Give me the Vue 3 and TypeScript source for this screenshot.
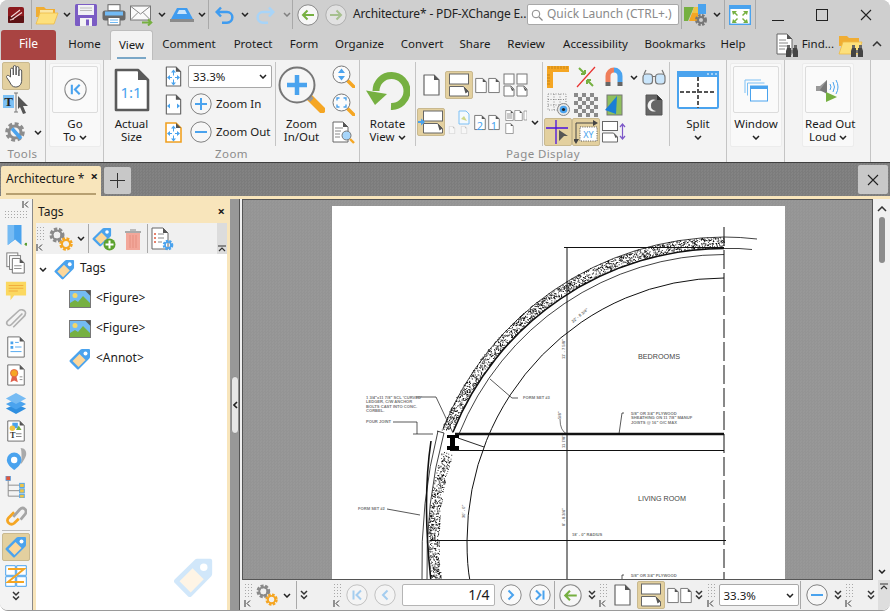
<script setup lang="ts">
import { h } from 'vue'

interface IconLabel {
  x: number
  y: number
  size: number
  text: string
  fill: string
  family: string
  weight?: number
}

const iconLabels: Record<string, IconLabel[]> = {
  tcur: [{ x: 5.5, y: 14, size: 13, text: 'T', fill: '#222', family: 'Liberation Serif', weight: 700 }],
  actual: [{ x: 17, y: 30, size: 15, text: '1:1', fill: '#4aa3ee', family: 'Noto Sans' }],
  n21: [
    { x: 6, y: 18, size: 11, text: '2', fill: '#4aa3ee', family: 'Noto Sans' },
    { x: 20, y: 18, size: 11, text: '1', fill: '#4aa3ee', family: 'Noto Sans' },
  ],
  xy: [{ x: 14.5, y: 18, size: 9, text: 'XY', fill: '#4aa3ee', family: 'Noto Sans' }],
  content: [{ x: 8.5, y: 20, size: 9, text: 'T', fill: '#333', family: 'Liberation Serif', weight: 700 }],
}

const Ico = (p: { n: string; w: number; h?: number; vb?: string }) => {
  const labels = iconLabels[p.n] ?? []
  return h('svg', { width: p.w, height: p.h ?? p.w, viewBox: p.vb }, [
    h('use', { href: '#' + p.n }),
    ...labels.map((l) =>
      h(
        'text',
        {
          x: l.x,
          y: l.y,
          'text-anchor': 'middle',
          'font-size': l.size,
          'font-family': l.family,
          'font-weight': l.weight ?? 400,
          fill: l.fill,
        },
        l.text,
      ),
    ),
  ])
}

const tabs = ['Home', 'View', 'Comment', 'Protect', 'Form', 'Organize', 'Convert', 'Share', 'Review', 'Accessibility', 'Bookmarks', 'Help']
const railTop = ['bookmark', 'pages', 'comment', 'clip', 'form', 'cert', 'layers', 'content', 'pins', 'tree', 'link']
const treeRows = [
  { icon: 'image', text: '<Figure>' },
  { icon: 'image', text: '<Figure>' },
  { icon: 'tag', text: '<Annot>' },
]

function makeStipple(): string {
  let s = 7
  const r = () => (s = (s * 16807) % 2147483647) / 2147483647
  let d = ''
  for (let i = 0; i < 2600; i++) {
    const a = (Math.PI / 180) * (172 + r() * 98)
    let R = 293 + r() * 11
    let y = 540 + R * Math.sin(a)
    if (y > 429 && y < 450) continue
    if (y >= 450) {
      R = 285 + r() * 11
      y = 540 + R * Math.sin(a)
    }
    const x = 724 + R * Math.cos(a)
    if (x > 724) continue
    d += `M${x.toFixed(1)} ${y.toFixed(1)}h.9v.9h-.9z`
  }
  return d
}
const stipple = makeStipple()
const wallNotes = [
  { x: 366, y: 397.5, t: '1 3/4"x11 7/8" SCL \'CURVED\'' },
  { x: 366, y: 402, t: 'LEDGER, C/W ANCHOR' },
  { x: 366, y: 406.5, t: 'BOLTS CAST INTO CONC.' },
  { x: 366, y: 411, t: 'CORBEL.' },
  { x: 366, y: 421.5, t: 'POUR JOINT' },
  { x: 523, y: 397.5, t: 'FORM SET #3' },
  { x: 631, y: 413.5, t: '5/8" OR 3/4" PLYWOOD' },
  { x: 631, y: 418, t: 'SHEATHING ON 11 7/8" MANUF' },
  { x: 631, y: 422.5, t: 'JOISTS @ 16" O/C MAX' },
  { x: 358, y: 508.5, t: 'FORM SET #2' },
  { x: 572, y: 535, t: '18\' - 0" RADIUS' },
  { x: 631, y: 575.5, t: '5/8" OR 3/4" PLYWOOD' },
]
</script>

<template>
  <div class="root">
    <div class="win">
      <!-- title bar -->
      <header class="titlebar">
        <Ico n="logo" :w="16" /><i class="vsep"></i>
        <Ico n="folder" :w="24" :h="20" /><Ico n="chev" :w="8" :h="5" />
        <Ico n="save" :w="22" />
        <Ico n="print" :w="24" :h="22" />
        <Ico n="mail" :w="24" :h="22" /><Ico n="chev" :w="8" :h="5" />
        <Ico n="stamp" :w="24" :h="16" /><Ico n="chev" :w="8" :h="5" /><i class="vsep"></i>
        <Ico n="undo" :w="20" :h="18" /><Ico n="chev" :w="8" :h="5" />
        <Ico n="redo" :w="20" :h="18" /><Ico class="pale" n="chev" :w="8" :h="5" /><i class="vsep"></i>
        <Ico n="cback" :w="22" /><Ico class="pale" n="cfwd" :w="22" />
        <div class="title">Architecture* - PDF-XChange E..</div>
        <div class="quick"><Ico n="search" :w="12" /><span>Quick Launch (CTRL+.)</span></div>
        <i></i><i class="vsep"></i>
        <Ico n="apps" :w="24" /><Ico n="chev" :w="8" :h="5" /><i class="vsep"></i>
        <Ico n="fullscr" :w="22" :h="20" /><i class="vsep"></i>
        <Ico n="wmin" :w="14" /><Ico n="wmax" :w="14" /><Ico n="wclose" :w="14" />
      </header>

      <!-- menu tabs -->
      <nav class="menubar">
        <div class="file">File</div>
        <div v-for="t in tabs" :key="t" class="tab" :class="{ active: t === 'View', home: t === 'Home' }">{{ t }}</div>
        <div class="finder">
          <Ico n="findDoc" :w="22" :h="24" /><span>Find...</span><Ico n="findFolder" :w="25" :h="24" />
        </div>
        <Ico class="collapse" n="chevUp" :w="10" :h="6" />
      </nav>

      <!-- ribbon -->
      <section class="ribbon">
        <div class="group g-tools">
          <div class="body col">
            <div class="btn28 on"><Ico n="hand" :w="20" :h="24" /></div>
            <div class="btn28"><Ico n="tcur" :w="26" :h="24" vb="0 0 26 24" /></div>
            <div class="gear-row"><Ico n="wrench" :w="22" /><Ico n="chev" :w="8" :h="5" /></div>
          </div>
          <div class="label">Tools</div>
        </div>

        <div class="group g-go">
          <div class="body">
            <div class="card">
              <div class="inner"><Ico n="cfirst" :w="23" /></div>
              <div class="txt">Go<br />To <Ico class="inl" n="chev" :w="8" :h="5" /></div>
            </div>
          </div>
        </div>

        <div class="group g-zoom">
          <div class="body row">
            <div class="big w55">
              <div class="bigicon"><Ico n="actual" :w="36" :h="44" vb="0 0 36 44" /></div>
              <div class="txt">Actual<br />Size</div>
            </div>
            <div class="col w28">
              <div class="btn28"><Ico n="pfit" :w="17" :h="21" /></div>
              <div class="btn28"><Ico n="pwidth" :w="17" :h="21" /></div>
              <div class="btn28"><Ico n="pvisible" :w="17" :h="21" /></div>
            </div>
            <div class="col zoomctl">
              <div class="h28"><div class="combo big-combo"><span>33.3%</span><Ico n="chev" :w="8" :h="5" /></div></div>
              <div class="h28 zrow"><Ico n="cplus" :w="22" /><span>Zoom In</span></div>
              <div class="h28 zrow"><Ico n="cminus" :w="22" /><span>Zoom Out</span></div>
            </div>
            <div class="big w51">
              <div class="bigicon"><Ico n="zoomBig" :w="47" /></div>
              <div class="txt">Zoom<br />In/Out</div>
            </div>
            <div class="col w33">
              <div class="btn33"><Ico n="zud" :w="23" /></div>
              <div class="btn33"><Ico n="zfit" :w="23" /></div>
              <div class="btn33"><Ico n="zdoc" :w="23" /></div>
            </div>
          </div>
          <div class="label">Zoom</div>
        </div>

        <div class="group g-page">
          <div class="body row">
            <div class="big w57 sepr">
              <div class="bigicon"><Ico n="rotate" :w="44" :h="40" /></div>
              <div class="txt">Rotate<br />View <Ico class="inl" n="chev" :w="8" :h="5" /></div>
            </div>
            <div class="layouts sepr">
              <div class="btn28"><Ico n="page" :w="17" :h="22" /></div>
              <div class="btn28 on"><Ico n="contin" :w="22" :h="24" /></div>
              <div class="btn28"><Ico n="ptwo" :w="25" :h="21" /></div>
              <div class="btn28"><Ico n="pfour" :w="25" :h="24" /></div>
              <i></i>
              <div class="btn28 on"><Ico n="contarrow" :w="26" :h="24" /></div>
              <div class="btn28"><Ico n="pthumbs" :w="22" :h="24" /></div>
              <div class="btn28"><Ico n="n21" :w="26" :h="21" vb="0 0 26 21" /></div>
              <div class="btn28"><Ico n="multi" :w="24" :h="24" /></div>
              <div class="btn12"><Ico n="chev" :w="8" :h="5" /></div>
            </div>
            <div class="ptools sepr">
              <div class="btn28"><Ico n="ruler" :w="22" /></div>
              <div class="btn28"><Ico n="redline" :w="20" :h="22" /></div>
              <div class="btn28"><Ico n="magnet" :w="18" :h="20" /></div>
              <div class="btn12"><Ico n="chev" :w="8" :h="5" /></div>
              <div class="btn28"><Ico n="glasses" :w="24" :h="16" /></div>
              <div class="btn28"><Ico n="gridEye" :w="23" /></div>
              <div class="btn28"><Ico n="checker" :w="24" /></div>
              <div class="btn28"><Ico n="shape" :w="18" :h="22" /></div>
              <i></i>
              <div class="btn28"><Ico n="moon" :w="18" :h="22" /></div>
              <div class="btn28 on"><Ico n="cross" :w="24" /></div>
              <div class="btn28 on"><Ico n="xy" :w="24" vb="0 0 24 24" /></div>
              <div class="btn28"><Ico n="parrows" :w="24" :h="22" /></div>
            </div>
            <div class="big w57">
              <div class="bigicon"><Ico n="split" :w="42" :h="38" /></div>
              <div class="txt">Split<br /><Ico class="inl" n="chev" :w="8" :h="5" /></div>
            </div>
          </div>
          <div class="label">Page Display</div>
        </div>

        <div class="group g-win">
          <div class="body">
            <div class="card">
              <div class="inner"><Ico n="windows" :w="24" /></div>
              <div class="txt">Window<br /><Ico class="inl" n="chev" :w="8" :h="5" /></div>
            </div>
          </div>
        </div>

        <div class="group g-read">
          <div class="body">
            <div class="card">
              <div class="inner"><Ico n="speaker" :w="24" /></div>
              <div class="txt">Read Out<br />Loud <Ico class="inl" n="chev" :w="8" :h="5" /></div>
            </div>
          </div>
        </div>
      </section>

      <!-- document tab strip -->
      <div class="tabstrip">
        <div class="doctab">
          <span>Architecture *</span>
          <b class="tabx">×</b>
        </div>
        <div class="tabbtn"><Ico n="plus" :w="15" /></div>
        <div class="tabbtn closeall"><Ico n="wclose" :w="14" /></div>
      </div>

      <!-- main area -->
      <main class="main">
        <aside class="rail">
          <Ico class="railk" n="ksm" :w="7" />
          <div class="dots raildots"></div>
          <div v-for="r in railTop" :key="r" class="railitem">
            <Ico :n="r" :w="22" vb="0 0 24 24" />
          </div>
          <i class="hsep"></i>
          <div class="railbtn"><Ico n="tag" :w="22" /></div>
          <div class="railitem"><Ico n="zorder" :w="22" /></div>
          <Ico class="raildbl" n="dbl" :w="8" :h="10" />
        </aside>

        <section class="panel">
          <div class="panelhead"><span>Tags</span><b>×</b></div>
          <div class="paneltools">
            <div class="grip"><div class="dots griptall"></div><Ico n="ksm" :w="7" /></div>
            <Ico n="gears" :w="24" />
            <Ico n="chev" :w="8" :h="5" />
            <i class="vsep"></i>
            <Ico n="tagadd" :w="24" />
            <Ico n="trash" :w="18" :h="22" />
            <i class="vsep"></i>
            <Ico n="tagcog" :w="24" />
            <i></i>
            <div class="panelend"><Ico n="chevUpLine" :w="8" :h="7" /></div>
          </div>
          <div class="tree">
            <div class="treehead">
              <Ico n="chev" :w="8" :h="5" />
              <Ico n="tag" :w="21" />
              <span>Tags</span>
            </div>
            <div v-for="(t, i) in treeRows" :key="i" class="treerow">
              <Ico :n="t.icon" :w="22" :h="t.icon === 'tag' ? 22 : 18" />
              <span>{{ t.text }}</span>
            </div>
            <Ico class="watermark" n="tag" :w="41" />
          </div>
        </section>

        <div class="splitter"><div class="pill"><Ico n="chevLeft" :w="5" :h="8" /></div></div>

        <div class="docwrap">
          <div class="docrow">
            <div class="canvas">
              <div class="pdfpage">
                <svg class="drawing" viewBox="332 205 453 375" width="453" height="375">
                  <g fill="none" stroke="#111">
                    <path d="M724 226V580" stroke-dasharray="19 4" stroke-width="1" />
                    <path d="M567 246V580" />
                    <path d="M564 246.5H724" />
                    <path d="M455 433H724" stroke-width="2.4" />
                    <path d="M450 449.5H724" />
                    <path d="M430 539.5H726" />
                    <path d="M724 277A257 263 0 0 0 467 540Q467 565 470 580" stroke-width="1" />
                    <path d="M724 253.500A286.500 286.500 0 0 0 459 433" stroke-width=".8" />
                    <path d="M724 247.500A292.500 292.500 0 0 0 453 431" stroke-width="1.600" />
                    <path d="M724 236A304 304 0 0 0 443 428" stroke-width=".8" />
                    <path d="M724 236Q740 236 757 238M724 247.500Q740 247 752 248.500" stroke-width=".8" />
                    <path d="M438 430Q420 500 422 580" stroke-width=".8" />
                    <path d="M444 432Q425 500 427 580" stroke-width=".8" />
                    <path d="M437 430L444 432" stroke-width=".8" />
                    <path d="M431 440Q422 500 431 580" stroke-width="1.600" />
                    <path d="M416 396H436L453 432" stroke-width=".7" />
                    <path d="M393 421H417V433M413 433H433" stroke-width=".7" />
                    <path d="M518 397H512L490 378" stroke-width=".7" />
                    <path d="M624 412H622L619 433" stroke-width=".7" />
                    <path d="M387 508L420 514" stroke-width=".7" />
                    <path d="M458 437L484 446" stroke-width=".9" />
                    <path d="M560 418Q560 430 567 433" stroke-width=".6" />
                    <path d="M624 574H622V580" stroke-width=".7" />
                  </g>
                  <path :d="stipple" fill="#111" />
                  <path d="M447 434h12v3h-4v8h4v4h-12v-4h3v-8h-3z" fill="#000" />
                  <g fill="#777" class="tiny">
                    <text v-for="n in wallNotes" :key="n.y + n.t" :x="n.x" :y="n.y">{{ n.t }}</text>
                    <text transform="translate(565 358) rotate(-90)">11' - 7 5/8"</text>
                    <text transform="translate(561 418) rotate(-90)">5/8"</text>
                    <text transform="translate(565 447) rotate(-90)">11 7/8"</text>
                    <text transform="translate(565 525) rotate(-90)">8' - 8 3/4"</text>
                    <text transform="translate(465 517) rotate(-90)">30' - 0"</text>
                    <text transform="translate(573 322) rotate(-40)">22' - 8 3/4"</text>
                  </g>
                  <g fill="#444" class="room">
                    <text x="638" y="358">BEDROOMS</text>
                    <text x="638" y="500">LIVING ROOM</text>
                  </g>
                </svg>
              </div>
            </div>
            <div class="vscroll">
              <Ico n="chevUp" :w="10" :h="6" />
              <div class="thumb"></div>
              <Ico class="vdown" n="chev" :w="8" :h="5" />
            </div>
          </div>
          <footer class="status">
            <div class="grip"><div class="dots gripshort"></div><Ico n="ksm" :w="7" /></div>
            <Ico n="gears" :w="22" />
            <Ico n="chev" :w="8" :h="5" />
            <i class="vsep"></i>
            <Ico n="dbl" :w="8" :h="10" />
            <i></i>
            <div class="grip"><div class="dots gripshort"></div><Ico n="ksm" :w="7" /></div>
            <Ico class="pale" n="cfirst" :w="22" />
            <Ico class="pale" n="cprev" :w="22" />
            <div class="pagebox">1/4</div>
            <Ico n="cnext" :w="22" />
            <Ico n="clast" :w="22" />
            <i class="vsep"></i>
            <Ico n="cback" :w="23" />
            <Ico n="dbl" :w="8" :h="10" />
            <div class="grip"><div class="dots gripshort"></div><Ico n="ksm" :w="7" /></div>
            <Ico n="page" :w="17" :h="22" />
            <div class="btn28 on"><Ico n="contin" :w="22" :h="24" /></div>
            <Ico n="ptwo" :w="25" :h="21" />
            <Ico n="dbl" :w="8" :h="10" />
            <div class="grip"><div class="dots gripshort"></div><Ico n="ksm" :w="7" /></div>
            <div class="combo small-combo"><span>33.3%</span><Ico n="chev" :w="8" :h="5" /></div>
            <i class="vsep"></i>
            <Ico n="cminus" :w="22" />
            <Ico n="dbl" :w="8" :h="10" />
            <div class="grip"><div class="dots gripshort"></div><Ico n="ksm" :w="7" /></div>
            <i></i>
            <Ico n="dbl" :w="8" :h="10" />
            <div class="statend"><Ico n="chevUpLine" :w="8" :h="7" /></div>
          </footer>
        </div>
      </main>
    </div>

    <!-- icon definitions -->
    <svg class="defs" width="0" height="0">
      <symbol id="chev" viewBox="0 0 8 5"><path d="M1 1l3 3 3-3" fill="none" stroke="#222" stroke-width="1.5" /></symbol>
      <symbol id="chevUp" viewBox="0 0 10 6"><path d="M1 5l4-4 4 4" fill="none" stroke="#333" stroke-width="1.5" /></symbol>
      <symbol id="chevUpLine" viewBox="0 0 8 7"><path d="M0 1h8M1 6l3-3 3 3" fill="none" stroke="#333" stroke-width="1.2" /></symbol>
      <symbol id="chevLeft" viewBox="0 0 5 8"><path d="M4 1L1 4l3 3" fill="none" stroke="#222" stroke-width="1.6" /></symbol>
      <symbol id="dbl" viewBox="0 0 8 10"><path d="M1 1l3 3 3-3M1 5.500l3 3 3-3" fill="none" stroke="#333" stroke-width="1.5" /></symbol>
      <symbol id="ksm" viewBox="0 0 7 7"><path d="M1 0v7M6 .5L3 3.500l3 3" fill="none" stroke="#333" stroke-width="1" /></symbol>
      <symbol id="plus" viewBox="0 0 15 15"><path d="M7.500 0v15M0 7.500h15" stroke="#333" /></symbol>
      <symbol id="wmin" viewBox="0 0 14 14"><path d="M1 12.500h12" stroke="#222" /></symbol>
      <symbol id="wmax" viewBox="0 0 14 14"><rect x="1.500" y="1.500" width="11" height="11" fill="none" stroke="#222" /></symbol>
      <symbol id="wclose" viewBox="0 0 14 14"><path d="M2 2l10 10M12 2L2 12" stroke="#222" stroke-width="1.100" /></symbol>
      <symbol id="search" viewBox="0 0 12 12"><circle cx="5" cy="5" r="3.800" fill="none" stroke="#888" /><path d="M8 8l3.500 3.500" stroke="#888" stroke-width="1.200" /></symbol>

      <symbol id="logo" viewBox="0 0 16 16"><rect width="16" height="16" rx="2" fill="#8c1a1e" /><rect y="9" width="16" height="7" rx="1" fill="#5e1214" /><path d="M3 10l9-7M4 12.500l10-7M2 13l4-1" stroke="#f1d5d5" stroke-width="1.200" fill="none" /></symbol>
      <symbol id="folder" viewBox="0 0 24 20"><path d="M1 2h8l2 2h9v8H1z" fill="#f0ad33" /><path d="M5 5h13v6H5z" fill="#fbe6a4" /><path d="M1 19L5 8h18l-4 11z" fill="#fde07c" stroke="#edbb46" stroke-width=".8" /></symbol>
      <symbol id="save" viewBox="0 0 22 22"><rect width="22" height="22" rx="1.500" fill="#7b5cc4" /><rect x="3" y="1" width="16" height="10" fill="#f1f1f5" /><path d="M5 4h12M5 6.500h12" stroke="#bbb" /><rect x="5" y="14" width="12" height="8" fill="#f3f3f3" /><rect x="11" y="15.500" width="3" height="6" fill="#7b5cc4" /></symbol>
      <symbol id="print" viewBox="0 0 24 22"><rect x="6" y=".7" width="12" height="6" fill="#fff" stroke="#666" /><rect x="0.500" y="6.500" width="23" height="10" rx="2.500" fill="#6a6a6a" /><rect x="3" y="7.500" width="18" height="4" fill="#71baf5" /><rect x="6" y="13.500" width="12" height="7.500" fill="#fff" stroke="#666" /><path d="M8 16h8M8 18.500h8" stroke="#71baf5" /></symbol>
      <symbol id="mail" viewBox="0 0 24 22"><rect x=".5" y="2" width="20" height="14" fill="#fafafa" stroke="#777" /><path d="M1 2.500L10.500 10 20 2.500M1 15.500l7-7M20 15.500l-7-7" fill="none" stroke="#888" /><path d="M12 18.500h9M18 15.500l3.300 3-3.300 3" fill="none" stroke="#76b041" stroke-width="2" /></symbol>
      <symbol id="stamp" viewBox="0 0 24 16"><path d="M7 1h10l6 11H1z" fill="#3f9cf0" /><path d="M9 3h6l2 4H7z" fill="#c7e4fd" /><rect y="12" width="24" height="3" fill="#8b8b8b" /></symbol>
      <symbol id="undo" viewBox="0 0 20 18"><path d="M6 1.500L1.700 6 6 10.500M2 6h10a5 5 0 010 10.700H7" fill="none" stroke="#3f9cf0" stroke-width="2.500" /></symbol>
      <symbol id="redo" viewBox="0 0 20 18"><path d="M14 1.500L18.300 6 14 10.500M18 6H8a5 5 0 000 10.700h5" fill="none" stroke="#a8d4f8" stroke-width="2.500" /></symbol>

      <symbol id="cback" viewBox="0 0 22 22"><circle cx="11" cy="11" r="10.200" fill="#f7f7f7" stroke="#8a8a8a" /><path d="M17 11H6M10.500 6.500L6 11l4.500 4.500" fill="none" stroke="#76b041" stroke-width="2" /></symbol>
      <symbol id="cfwd" viewBox="0 0 22 22"><circle cx="11" cy="11" r="10.200" fill="#f7f7f7" stroke="#8a8a8a" /><path d="M5 11h11M11.500 6.500L16 11l-4.500 4.500" fill="none" stroke="#76b041" stroke-width="2" /></symbol>
      <symbol id="cfirst" viewBox="0 0 22 22"><circle cx="11" cy="11" r="10.200" fill="#fafafa" stroke="#8a8a8a" /><path d="M7.500 6.500v9M15 6.500L10.500 11l4.500 4.500" fill="none" stroke="#4aa3ee" stroke-width="2" /></symbol>
      <symbol id="clast" viewBox="0 0 22 22"><circle cx="11" cy="11" r="10.200" fill="#fafafa" stroke="#8a8a8a" /><path d="M14.500 6.500v9M7 6.500l4.500 4.500L7 15.500" fill="none" stroke="#4aa3ee" stroke-width="2" /></symbol>
      <symbol id="cprev" viewBox="0 0 22 22"><circle cx="11" cy="11" r="10.200" fill="#fafafa" stroke="#8a8a8a" /><path d="M13.500 6.500L9 11l4.500 4.500" fill="none" stroke="#4aa3ee" stroke-width="2" /></symbol>
      <symbol id="cnext" viewBox="0 0 22 22"><circle cx="11" cy="11" r="10.200" fill="#fafafa" stroke="#8a8a8a" /><path d="M8.500 6.500L13 11l-4.500 4.500" fill="none" stroke="#4aa3ee" stroke-width="2" /></symbol>
      <symbol id="cplus" viewBox="0 0 22 22"><circle cx="11" cy="11" r="10.200" fill="#f7f7f7" stroke="#808080" /><path d="M11 5v12M5 11h12" stroke="#4aa3ee" stroke-width="2" /></symbol>
      <symbol id="cminus" viewBox="0 0 22 22"><circle cx="11" cy="11" r="10.200" fill="#f7f7f7" stroke="#808080" /><path d="M5 11h12" stroke="#4aa3ee" stroke-width="2" /></symbol>

      <symbol id="apps" viewBox="0 0 24 24"><path d="M0 4h10L4 18H0z" fill="#76b041" /><path d="M10 4h4v6h-6z" fill="#f0c445" /><path d="M14 1h8v10h-8z" fill="#4aa3ee" /><path d="M8 10h6v8H5z" fill="#f5a623" /><circle cx="17" cy="17" r="4.500" fill="none" stroke="#777" stroke-width="3" stroke-dasharray="2.300 1.300" /><circle cx="17" cy="17" r="3" fill="none" stroke="#777" stroke-width="2" /></symbol>
      <symbol id="fullscr" viewBox="0 0 22 20"><rect x=".7" y=".7" width="20.600" height="18.600" fill="#fff" stroke="#4aa3ee" stroke-width="1.400" /><rect width="22" height="4" fill="#4aa3ee" /><path d="M3 6h5L6.500 7.500 9 10l-1 1-2.500-2.500L4 10zM19 6h-5l1.500 1.500L13 10l1 1 2.500-2.500L18 10zM3 18h5l-1.500-1.500L9 14l-1-1-2.500 2.500L4 14zM19 18h-5l1.500-1.500L13 14l1-1 2.500 2.500L18 14z" fill="#76b041" /></symbol>
      <symbol id="binoc" viewBox="0 0 12 12"><path d="M1 3h4v9H0V6zM7 3h4l1 3v6H7z" fill="#444" /><rect x="1" y="0" width="3" height="3" fill="#666" /><rect x="8" y="0" width="3" height="3" fill="#666" /><rect x="5" y="5" width="2" height="3" fill="#777" /></symbol>
      <symbol id="findDoc" viewBox="0 0 22 24"><path d="M1 1h10l5 5v15H1z" fill="#fff" stroke="#666" /><path d="M11 1l5 5h-5z" fill="#555" /><path d="M3 7h7M3 10h9M3 13h9M3 16h6" stroke="#888" /><use href="#binoc" x="10" y="12" width="12" height="12" /></symbol>
      <symbol id="findFolder" viewBox="0 0 25 24"><path d="M1 3h8l2 2h10v8H1z" fill="#f0ad33" /><path d="M1 21L5 9h19l-4 12z" fill="#fde07c" stroke="#edbb46" stroke-width=".8" /><use href="#binoc" x="13" y="12" width="12" height="12" /></symbol>

      <symbol id="hand" viewBox="0 0 20 24"><path d="M4.500 13V5.500a1.400 1.400 0 012.800 0V11 3a1.400 1.400 0 012.800 0v8V4a1.400 1.400 0 012.800 0v8V7a1.400 1.400 0 012.800 0v9c0 4.500-2.500 7-6 7s-4.500-2-6-5l-3-4.500c-1-1.500 1-3 2.500-1.500z" fill="#fff" stroke="#555" /></symbol>
      <symbol id="tcur" viewBox="0 0 26 24"><rect y="3" width="11" height="13" fill="#7cc0f5" /><path d="M11 1h4M13 1v19M11 20h4" stroke="#777" fill="none" /><path d="M15 4l10 10h-5l3 7-3 1-3-7-2 2z" fill="#555" /></symbol>
      <symbol id="wrench" viewBox="0 0 22 22"><circle cx="10" cy="11" r="7.500" fill="none" stroke="#8d8d8d" stroke-width="4.500" stroke-dasharray="3.500 2.300" /><circle cx="10" cy="11" r="6" fill="none" stroke="#8d8d8d" stroke-width="3" /><path d="M7 7.500l9 10" stroke="#4aa3ee" stroke-width="3.500" /></symbol>

      <symbol id="page" viewBox="0 0 17 22"><path d="M1 1h10l5 5v15H1z" fill="#fff" stroke="#666" stroke-width="1.200" stroke-linejoin="round" /><path d="M11 1l5 5h-5z" fill="#555" /></symbol>
      <symbol id="actual" viewBox="0 0 36 44"><path d="M2 2h22l10 10v30H2z" fill="#fff" stroke="#5a5a5a" stroke-width="2.600" stroke-linejoin="round" /><path d="M24 2l10 10H24z" fill="#5a5a5a" /></symbol>
      <symbol id="arr4" viewBox="0 0 17 21"><path d="M8.500 3.500l2.500 3h-5zM8.500 19.500l2.500-3h-5zM2 11.500l3-2.500v5zM15 11.500L12 9v5z" fill="#4aa3ee" /><path d="M8.500 6v3.500M8.500 13.500V17M5 11.500h2M10 11.500h2" stroke="#4aa3ee" /></symbol>
      <symbol id="pfit" viewBox="0 0 17 21"><use href="#page" width="17" height="21" /><use href="#arr4" width="17" height="21" /></symbol>
      <symbol id="pwidth" viewBox="0 0 17 21"><use href="#page" width="17" height="21" /><path d="M2 12l3-2.500v5zM15 12l-3-2.500v5z" fill="#4aa3ee" /></symbol>
      <symbol id="pvisible" viewBox="0 0 17 21"><path d="M1 1h10l5 5v14H1z" fill="#fff" stroke="#f0a020" stroke-width="1.600" /><path d="M11 1l5 5h-5z" fill="#555" /><use href="#arr4" width="17" height="21" /></symbol>
      <symbol id="zoomBig" viewBox="0 0 47 47"><path d="M30 30l14 14" stroke="#f5a623" stroke-width="7" stroke-linecap="round" /><path d="M30 30l4 4" stroke="#999" stroke-width="5" /><circle cx="19" cy="19" r="17.500" fill="#f6f6f6" stroke="#777" stroke-width="2" /><path d="M19 9v20M9 19h20" stroke="#4aa3ee" stroke-width="4.500" /></symbol>
      <symbol id="lens" viewBox="0 0 23 23"><path d="M15 15l7 7" stroke="#f5a623" stroke-width="3.500" stroke-linecap="round" /><circle cx="9.500" cy="9.500" r="8.500" fill="#fbfbfb" stroke="#777" /></symbol>
      <symbol id="zud" viewBox="0 0 23 23"><use href="#lens" width="23" height="23" /><path d="M9.500 3.500l3.500 4.500H6zM9.500 15.500L13 11H6z" fill="#4aa3ee" /></symbol>
      <symbol id="zfit" viewBox="0 0 23 23"><use href="#lens" width="23" height="23" /><path d="M5 7.500V5h2.500M11.500 5H14v2.500M5 11.500V14h2.500M14 11.500V14h-2.500" fill="none" stroke="#4aa3ee" stroke-width="1.400" /></symbol>
      <symbol id="zdoc" viewBox="0 0 23 23"><path d="M1 1h10l5 5v15H1z" fill="#fff" stroke="#666" /><path d="M11 1l5 5h-5z" fill="#555" /><path d="M3 7h8M3 10h6M3 13h5M3 16h5" stroke="#888" /><path d="M18 18l4 4" stroke="#f5a623" stroke-width="2.400" /><circle cx="14.500" cy="14.500" r="4.500" fill="#a6d5fa" stroke="#777" /></symbol>
      <symbol id="rotate" viewBox="0 0 44 40"><path d="M25 36.500A15.500 15.500 0 1 0 10 21" fill="none" stroke="#76b041" stroke-width="7" /><path d="M0 20.500L21 24 9 35z" fill="#76b041" /></symbol>

      <symbol id="contin" viewBox="0 0 22 24"><rect x="1.500" y="1" width="19" height="10" fill="#fff" stroke="#666" /><path d="M1.500 13.500h14l5 5V23h-19z" fill="#fff" stroke="#666" /><path d="M15.500 13.500l5 5-3 2z" fill="#555" /></symbol>
      <symbol id="contarrow" viewBox="0 0 26 24"><use href="#contin" x="4" width="22" height="24" /><path d="M0 12h4" stroke="#4aa3ee" stroke-width="2" /><path d="M3 8.500l4 3.500-4 3.500z" fill="#4aa3ee" /></symbol>
      <symbol id="ptwo" viewBox="0 0 25 21"><use href="#page" y="1" width="12" height="19" /><use href="#page" x="13" y="1" width="12" height="19" /></symbol>
      <symbol id="pfour" viewBox="0 0 25 24"><rect x="1" y="1" width="10" height="10" fill="#fff" stroke="#777" /><rect x="14" y="1" width="10" height="10" fill="#fff" stroke="#777" /><path d="M1 13h7l3 3v7H1z" fill="#fff" stroke="#777" /><path d="M14 13h7l3 3v7H14z" fill="#fff" stroke="#777" /><path d="M7 13l4 4-2 1zM20 13l4 4-2 1z" fill="#555" /></symbol>
      <symbol id="pthumbs" viewBox="0 0 22 24"><g opacity=".35"><use href="#page" y="16" width="8" height="8" /><use href="#page" x="12" y="16" width="8" height="8" /></g><path d="M11 1h7l3 3v10H11z" fill="#f4fafe" stroke="#7cc0f5" /><path d="M13 9l3-3 3 5z" fill="#cfd88a" /></symbol>
      <symbol id="n21" viewBox="0 0 26 21"><use href="#page" width="12" height="21" /><use href="#page" x="14" width="12" height="21" /></symbol>
      <symbol id="multi" viewBox="0 0 24 24"><use href="#page" x="2" y="0" width="9" height="11" /><use href="#page" x="11" y="0" width="9" height="11" /><path d="M21 1h3v9h-3z" fill="#fff" stroke="#888" stroke-width=".7" /><use href="#page" x="2" y="13" width="9" height="11" /><path d="M4 4h5M4 6h5M4 8h5" stroke="#666" stroke-width=".7" /></symbol>

      <symbol id="ruler" viewBox="0 0 22 22"><path d="M0 0h22v6H6v16H0z" fill="#f5a623" /><path d="M2 0v3M5 0v3M8 0v3M11 0v3M14 0v3M17 0v3M20 0v3M0 9h3M0 12h3M0 15h3M0 18h3" stroke="#b97a10" stroke-width=".7" /></symbol>
      <symbol id="redline" viewBox="0 0 20 22"><path d="M1 21L19 1" stroke="#e8312f" stroke-width="1.200" /><path d="M3 2l6 6M9 8V4M9 8H5M17 20l-6-6M11 14v4M11 14h4" fill="none" stroke="#76b041" stroke-width="2" /></symbol>
      <symbol id="magnet" viewBox="0 0 18 20"><path d="M3 15V9a6 6 0 016-6" fill="none" stroke="#ef7d5a" stroke-width="5" /><path d="M15 15V9a6 6 0 00-6-6" fill="none" stroke="#4aa3ee" stroke-width="5" /><path d="M.5 15h5v4h-5zM12.500 15h5v4h-5z" fill="#666" /></symbol>
      <symbol id="glasses" viewBox="0 0 24 16"><rect x="1" y="5" width="9.500" height="10" rx="3" fill="#c9e5fb" stroke="#777" stroke-width="1.200" /><rect x="13.500" y="5" width="9.500" height="10" rx="3" fill="#c9e5fb" stroke="#777" stroke-width="1.200" /><path d="M10.500 7.500h3M2 5l2-4M22 5l-2-4" fill="none" stroke="#777" stroke-width="1.200" /></symbol>
      <symbol id="gridEye" viewBox="0 0 23 23"><path d="M1 1h18v16H1zM7 1v16M13 1v16M1 6.500h18M1 12h18" fill="none" stroke="#888" stroke-dasharray="1 1.500" /><circle cx="16.500" cy="16.500" r="6" fill="#e8e8e8" stroke="#888" /><circle cx="16.500" cy="16.500" r="3.800" fill="#4aa3ee" /><circle cx="16.500" cy="16.500" r="1.600" fill="#222" /></symbol>
      <pattern id="chk" width="8" height="8" patternUnits="userSpaceOnUse"><rect width="4" height="4" fill="#8a8a8a" /><rect x="4" y="4" width="4" height="4" fill="#8a8a8a" /></pattern>
      <symbol id="checker" viewBox="0 0 24 24"><rect width="24" height="24" fill="url(#chk)" /></symbol>
      <symbol id="shape" viewBox="0 0 18 22"><rect x="2" y="1" width="15" height="20" fill="#8fbf5e" stroke="#777" /><path d="M0 16L12 2l-1 18z" fill="#1a7ed6" /></symbol>
      <symbol id="moon" viewBox="0 0 18 22"><path d="M1 1h11l5 5v15H1z" fill="#666" stroke="#555" stroke-linejoin="round" /><path d="M12 1l5 5h-5z" fill="#333" /><path d="M11 6a6 6 0 100 11 5 5 0 01-5-5.500A5 5 0 0111 6z" fill="#f2f2f2" /></symbol>
      <symbol id="cross" viewBox="0 0 24 24"><path d="M10 0v24M0 8h22" stroke="#4a10e0" stroke-width="1.300" /><path d="M13 10l9 6h-4l-2 2-3 3z" fill="#555" /></symbol>
      <symbol id="xy" viewBox="0 0 24 24"><path d="M2 20V3h19" fill="none" stroke="#444" /><path d="M19 0l5 3-5 3zM-1 19l3 5 3-5z" fill="#444" /><rect x="6" y="7" width="17" height="14" fill="#fff" stroke="#555" stroke-dasharray="1 1.300" /></symbol>
      <symbol id="parrows" viewBox="0 0 24 22"><rect x=".5" y=".5" width="15" height="9" fill="#fff" stroke="#666" /><path d="M.5 12h11l4 4v5H.5z" fill="#fff" stroke="#666" /><path d="M11.500 12l4 4-2 1z" fill="#555" /><path d="M20.500 3v15M18 6l2.500-3L23 6M18 15l2.500 3 2.500-3" fill="none" stroke="#7d58c8" stroke-width="1.200" /></symbol>
      <symbol id="split" viewBox="0 0 42 38"><rect x="1" y="1" width="40" height="36" rx="1.500" fill="#fff" stroke="#4aa3ee" stroke-width="2" /><rect width="42" height="6" fill="#4aa3ee" /><path d="M30 3h2M34 3h2M38 3h2" stroke="#fff" /><path d="M3 21h36M21 6v31" stroke="#555" stroke-width="2" stroke-dasharray="4 2" /></symbol>
      <symbol id="windows" viewBox="0 0 24 24"><path d="M1 15V2h16M3.500 17.500V5h17" fill="none" stroke="#7cc0f5" /><rect x="6.500" y="8" width="17" height="15" fill="#fff" stroke="#4aa3ee" /><rect x="6" y="8" width="18" height="3" fill="#4aa3ee" /></symbol>
      <symbol id="speaker" viewBox="0 0 24 24"><path d="M0 8h4l7-6v12l-7-1H0z" fill="#999" /><path d="M11 2v14l-7-4z" fill="#777" /><path d="M14 6q2 3 0 6M17 4q3 5 0 10M20 2q4 7 0 14" fill="none" stroke="#4aa3ee" /><path d="M10 14l11 5-11 5z" fill="#76b041" /></symbol>

      <symbol id="bookmark" viewBox="0 0 24 24"><path d="M3 1h15v22l-7-6-8 6z" fill="#4aa3ee" /><path d="M3 1h7v16l-7 6z" fill="#76bbf3" /><circle cx="23" cy="22" r="1.600" fill="#5d9f35" /></symbol>
      <symbol id="pages" viewBox="0 0 24 24"><rect x="2" y="1" width="12" height="15" fill="#fff" stroke="#777" /><rect x="5" y="4" width="12" height="15" fill="#fff" stroke="#777" /><path d="M8 7h8l5 5v11H8z" fill="#fff" stroke="#666" /><path d="M16 7l5 5h-5z" fill="#555" /><path d="M10 15h8M10 18h8" stroke="#888" /></symbol>
      <symbol id="comment" viewBox="0 0 24 24"><path d="M1 2h22v15H10l-4 5v-5H1z" fill="#fbd860" /><path d="M4 6h16M4 9h16M4 12h10" stroke="#f0a93a" /></symbol>
      <symbol id="clip" viewBox="0 0 24 24"><path d="M19 6L7 18c-3 3-7-1-4-4L15 3c2-2 6-1 7 1s0 4-2 6L9 21" fill="none" stroke="#b0b0b0" stroke-width="1.800" /></symbol>
      <symbol id="form" viewBox="0 0 24 24"><path d="M3 1h13l5 5v17H3z" fill="#fff" stroke="#666" /><path d="M16 1l5 5h-5z" fill="#555" /><path d="M6 6h3v3H6zM6 11h3v3H6z" fill="#4aa3ee" /><path d="M11 7h4M11 12h7M6 17h12" stroke="#4aa3ee" /></symbol>
      <symbol id="cert" viewBox="0 0 24 24"><path d="M3 1h13l5 5v17H3z" fill="#fff" stroke="#666" /><path d="M16 1l5 5h-5z" fill="#555" /><path d="M8 12l-2 8 4-2 4 2-2-8z" fill="#e0604c" /><circle cx="10" cy="10" r="4" fill="#f5a623" stroke="#e0604c" /><path d="M16 14h3M16 17h3" stroke="#888" /></symbol>
      <symbol id="layers" viewBox="0 0 24 24"><path d="M12 13L1 18l11 6 11-6z" fill="#2f8fe0" /><path d="M12 8L1 13l11 6 11-6z" fill="#4aa3ee" /><path d="M12 1L1 7l11 6 11-6z" fill="#76bbf3" /></symbol>
      <symbol id="content" viewBox="0 0 24 24"><path d="M3 1h13l5 5v17H3z" fill="#fff" stroke="#666" /><path d="M16 1l5 5h-5z" fill="#555" /><rect x="8" y="3" width="6" height="6" fill="#4aa3ee" /><circle cx="8" cy="9" r="3" fill="#f0c445" /><path d="M12 11l3-5 3 5z" fill="#76b041" /><path d="M12 15h6M12 18h6" stroke="#777" /></symbol>
      <symbol id="pins" viewBox="0 0 24 24"><path d="M17 0c4 0 7 3 6 8-1 3-3 7-6 10 1-4 1-6 1-9s0-7-1-9z" fill="#aaa" /><path d="M10 5a8 8 0 018 8c0 4-4 8-8 11-4-3-8-7-8-11a8 8 0 018-8z" fill="#4aa3ee" /><circle cx="10" cy="13" r="3.500" fill="#fff" /></symbol>
      <symbol id="tree" viewBox="0 0 24 24"><rect x="1" y="0" width="5" height="5" fill="#e0583c" stroke="#4aa3ee" stroke-width=".8" /><path d="M3.500 5v17M3.500 10H16M3.500 16H16M3.500 22H16" stroke="#888" /><rect x="16" y="8" width="5" height="4.500" fill="#f0c445" stroke="#4aa3ee" /><rect x="16" y="14" width="5" height="4.500" fill="#f0c445" stroke="#4aa3ee" /><rect x="16" y="20" width="5" height="4" fill="#f0c445" stroke="#4aa3ee" /></symbol>
      <symbol id="link" viewBox="0 0 24 24"><path d="M10 9l-6 6c-4 4 2 9 6 6l5-5" fill="none" stroke="#f5a623" stroke-width="3" /><path d="M9 14l7-8c4-4 9 1 6 5l-5 6" fill="none" stroke="#a5a5a5" stroke-width="3" /></symbol>
      <symbol id="tag" viewBox="0 0 22 22"><path d="M13 1h7a1 1 0 011 1v7a2 2 0 01-.6 1.400L10 21a1.400 1.400 0 01-2 0l-7-7a1.400 1.400 0 010-2L11.600 1.600A2 2 0 0113 1z" fill="#4aa3ee" /><path d="M10.500 6l6 6-7 7-6-6z" fill="#fcd79a" /><circle cx="16.500" cy="5.500" r="2" fill="#fff" /></symbol>
      <symbol id="zorder" viewBox="0 0 22 22"><path d="M.7.7h9.600v9.600H.7zM11.700.7h9.600v9.600h-9.600zM.7 11.700h9.600v9.600H.7zM11.700 11.700h9.600v9.600h-9.600z" fill="#fff" stroke="#4aa3ee" /><path d="M3 4h16L3 17h16" fill="none" stroke="#f5a623" stroke-width="2" /></symbol>

      <symbol id="gears" viewBox="0 0 24 24"><circle cx="8" cy="8" r="5.500" fill="none" stroke="#8a8a8a" stroke-width="4" stroke-dasharray="3 1.500" /><circle cx="8" cy="8" r="4.500" fill="none" stroke="#8a8a8a" stroke-width="2" /><circle cx="17" cy="17" r="5" fill="none" stroke="#f5a623" stroke-width="3.500" stroke-dasharray="2.600 1.300" /><circle cx="17" cy="17" r="4" fill="none" stroke="#f5a623" stroke-width="2" /></symbol>
      <symbol id="tagadd" viewBox="0 0 24 24"><use href="#tag" width="20" height="20" /><circle cx="17.500" cy="17.500" r="6" fill="#5da22f" /><path d="M17.500 13.500v8M13.500 17.500h8" stroke="#fff" stroke-width="2" /></symbol>
      <symbol id="trash" viewBox="0 0 18 22"><path d="M1 3h16v2H1z" fill="#aaa" /><path d="M6 1h6v2H6z" fill="#bbb" /><path d="M2 5h14v17H2z" fill="#f3a79a" /><path d="M6 7v13M9 7v13M12 7v13" stroke="#e58f80" /></symbol>
      <symbol id="tagcog" viewBox="0 0 24 24"><path d="M2 1h11l5 5v16H2z" fill="#fff" stroke="#666" /><path d="M13 1l5 5h-5z" fill="#555" /><path d="M4 7h2M4 11h2M4 15h2" stroke="#e0583c" stroke-width="1.500" /><path d="M8 7h6M8 11h6M8 15h4" stroke="#888" /><circle cx="18" cy="18" r="3.800" fill="none" stroke="#4aa3ee" stroke-width="3" stroke-dasharray="2 1.100" /><circle cx="18" cy="18" r="3" fill="none" stroke="#4aa3ee" stroke-width="1.600" /></symbol>
      <symbol id="image" viewBox="0 0 22 18"><rect x=".5" y=".5" width="21" height="17" fill="#74bbf3" stroke="#777" /><circle cx="6" cy="5.500" r="2.500" fill="#f3d76a" /><path d="M1 17V13l5-3 3 2 5-6 7 7v4z" fill="#76b041" /><path d="M16 .5h5.500V6z" fill="#555" /></symbol>
    </svg>
  </div>
</template>

<style>
html,
body {
  margin: 0;
  background: #fff;
}
svg {
  display: block;
  flex: none;
}
</style>

<style scoped>
.root {
  width: 890px;
  height: 612px;
  overflow: hidden;
  background: #fff;
  font-family: 'Noto Sans', 'Liberation Sans', sans-serif;
  font-size: 11.5px;
  color: #1a1a1a;
}
.win {
  width: 890px;
  height: 611px;
  display: flex;
  flex-direction: column;
  border-radius: 8px;
  overflow: hidden;
  background: #cfcfcf;
  border-bottom: 1px solid #9a9a9a;
  box-sizing: border-box;
}
.defs {
  position: absolute;
}
.pale {
  opacity: 0.45;
}
.vsep {
  display: block;
  width: 1px;
  height: 100%;
  background: #a9a9a9;
}
.dots {
  background-image: radial-gradient(#a8a8a8 0.7px, transparent 0.9px);
  background-size: 3px 3px;
}

/* title bar */
.titlebar {
  height: 29px;
  flex: none;
  display: grid;
  grid-template-columns: 31px 1px 29px 11px 28px 28px 28px 12px 28px 12px 1px 32px 8px 32px 11px 1px 29px 27px 178px 152px 2px 1px 28px 14px 1px 30px 1px 44px 44px 44px;
  place-items: center;
  background: #cfcfcf;
}
.titlebar .vsep {
  height: 29px;
}
.title {
  justify-self: start;
  padding: 0 0 2px 4px;
  font-size: 12px;
  white-space: nowrap;
  letter-spacing: -0.15px;
  color: #222;
}
.quick {
  width: 152px;
  height: 21px;
  box-sizing: border-box;
  display: flex;
  align-items: center;
  gap: 4px;
  padding-left: 3px;
  background: #fff;
  border: 1px solid #a8a8a8;
  border-radius: 2px;
  color: #8a8a8a;
  font-size: 12px;
  white-space: nowrap;
}
.quick span {
  padding-bottom: 2px;
}

/* menu */
.menubar {
  height: 31px;
  flex: none;
  display: grid;
  grid-template-columns: 56px 54px 43px 72px 56px 46px 65px 60px 46px 56px 83px 76px 40px 110px 27px;
  align-items: end;
  background: #cfcfcf;
}
.file {
  height: 30px;
  margin-left: 1px;
  background: #a94442;
  border-radius: 3px 3px 0 0;
  color: #fff;
  display: flex;
  align-items: center;
  justify-content: center;
  font-size: 12px;
  padding-bottom: 3px;
  box-sizing: border-box;
}
.tab {
  height: 30px;
  display: flex;
  align-items: center;
  justify-content: center;
  font-size: 11.5px;
  white-space: nowrap;
  padding-bottom: 3px;
  box-sizing: border-box;
}
.tab.home {
  padding-left: 3px;
}
.tab.active {
  background: #f3f3f3;
  border: 1px solid #bdbdbd;
  border-bottom: none;
  border-radius: 3px 3px 0 0;
  position: relative;
}
.tab.active::after {
  content: '';
  position: absolute;
  left: 6px;
  right: 6px;
  bottom: 1px;
  height: 2px;
  background: #7aa7c7;
}
.finder {
  display: flex;
  align-items: center;
  justify-self: end;
  height: 30px;
  font-size: 11.5px;
  gap: 4px;
}
.finder span {
  padding-bottom: 3px;
}
.collapse {
  justify-self: center;
  margin-bottom: 13px;
}

/* ribbon */
.ribbon {
  height: 102px;
  flex: none;
  display: flex;
  background: #f3f3f3;
  border-bottom: 1px solid #3f3f3f;
  box-sizing: content-box;
}
.group {
  box-sizing: border-box;
  border-right: 1px solid #c4c4c4;
  flex: none;
  display: flex;
  flex-direction: column;
}
.g-tools { width: 46px; }
.g-go { width: 58px; }
.g-zoom { width: 256px; }
.g-page { width: 367px; }
.g-win { width: 58px; }
.g-read { width: 86px; }
.body {
  height: 86px;
  padding-top: 2px;
  box-sizing: border-box;
}
.label {
  height: 16px;
  line-height: 15px;
  text-align: center;
  color: #8c8c8c;
  font-size: 11.5px;
  letter-spacing: 0.4px;
}
.row {
  display: flex;
}
.col {
  display: flex;
  flex-direction: column;
}
.btn28,
.btn33,
.btn12 {
  height: 28px;
  display: flex;
  align-items: center;
  justify-content: center;
  box-sizing: border-box;
  flex: none;
}
.btn28 { width: 28px; }
.btn33 { width: 33px; }
.btn12 { width: 12px; }
.on {
  background: #e3d09f;
  border: 1px solid #c9b98f;
  border-radius: 2px;
}
.h28 {
  height: 28px;
  display: flex;
  align-items: center;
}
.g-tools .body {
  padding-left: 2px;
}
.gear-row {
  height: 28px;
  display: flex;
  align-items: center;
  gap: 7px;
  padding-left: 3px;
}
.w28 { width: 28px; flex: none; }
.w33 { width: 33px; flex: none; }
.w51 { width: 51px; flex: none; }
.w55 { width: 55px; flex: none; }
.w57 { width: 56px; flex: none; }
.big {
  display: flex;
  flex-direction: column;
  align-items: center;
}
.bigicon {
  height: 55px;
  display: flex;
  align-items: center;
  justify-content: center;
}
.txt {
  font-size: 11.5px;
  line-height: 13px;
  text-align: center;
  white-space: nowrap;
}
.inl {
  display: inline-block;
  vertical-align: 1px;
}
.card {
  width: 52px;
  height: 84px;
  margin: 1px 0 0 3px;
  padding: 2px;
  box-sizing: border-box;
  background: #f9f9f9;
  border: 1px solid #ececec;
  border-radius: 2px;
}
.card .inner {
  height: 47px;
  background: #fafafa;
  border: 1px solid #dcdcdc;
  border-radius: 2px;
  display: flex;
  align-items: center;
  justify-content: center;
  box-sizing: border-box;
  margin-bottom: 4px;
}
.g-read .card {
  margin-left: 17px;
}
.zoomctl {
  width: 89px;
  flex: none;
  box-sizing: border-box;
  border-right: 1px solid #c4c4c4;
}
.zrow {
  padding-left: 3px;
  gap: 4px;
  font-size: 11.5px;
  white-space: nowrap;
}
.zrow span {
  padding-bottom: 2px;
}
.combo {
  display: flex;
  align-items: center;
  justify-content: space-between;
  box-sizing: border-box;
  background: #fff;
  border: 1px solid #a8a8a8;
  border-radius: 2px;
  padding: 0 4px;
  font-size: 11.5px;
}
.big-combo {
  width: 84px;
  height: 23px;
  margin-left: 1px;
}
.small-combo {
  width: 80px;
  height: 22px;
}
.sepr {
  border-right: 1px solid #c4c4c4;
  box-sizing: border-box;
}
.layouts {
  width: 127px;
  flex: none;
  padding: 9px 0 0 1px;
  display: grid;
  grid-template-columns: repeat(4, 28px) 12px;
  grid-auto-rows: 28px;
  row-gap: 9px;
  place-items: center;
}
.ptools {
  width: 127px;
  flex: none;
  padding: 1px 0 0 1px;
  display: grid;
  grid-template-columns: 28px 28px 28px 12px 28px;
  grid-template-rows: 28px 27px 28px;
  place-items: center;
}

/* doc tabs */
.tabstrip {
  height: 33px;
  flex: none;
  display: flex;
  align-items: flex-end;
  background-color: #7f7f7f;
  background-image: repeating-conic-gradient(#7c7c7c 0 25%, #838383 0 50%);
  background-size: 3px 3px;
  box-sizing: border-box;
}
.doctab {
  width: 100px;
  height: 30px;
  margin-left: 1px;
  background: #f8e5bb;
  border-radius: 2px 2px 0 0;
  position: relative;
  padding-left: 5px;
  box-sizing: border-box;
  line-height: 26px;
  font-size: 12px;
  white-space: nowrap;
}
.doctab::after {
  content: '';
  position: absolute;
  left: 5px;
  right: 5px;
  bottom: 1px;
  height: 2px;
  background: #b7a071;
}
.tabx {
  position: absolute;
  right: 3px;
  top: -3px;
  font-size: 13px;
  font-weight: 700;
}
.tabbtn {
  width: 27px;
  height: 27px;
  margin: 0 0 2px 3px;
  background: #c8c8c8;
  border-radius: 2px;
  display: flex;
  align-items: center;
  justify-content: center;
}
.closeall {
  width: 30px;
  height: 29px;
  margin-left: auto;
  margin-right: 2px;
}

/* main */
.main {
  flex: 1;
  min-height: 0;
  display: flex;
  border-top: 3px solid #f8e5bb;
  background: #f3f3f3;
}
.rail {
  width: 33px;
  flex: none;
  box-sizing: border-box;
  border-right: 1px solid #8a8a8a;
  display: flex;
  flex-direction: column;
  align-items: center;
  background: #f3f3f3;
}
.railk {
  align-self: flex-end;
  margin: 2px 3px 0 0;
}
.raildots {
  width: 25px;
  height: 9px;
  margin: 2px 0;
}
.railitem {
  height: 28px;
  width: 28px;
  flex: none;
  display: flex;
  align-items: center;
  justify-content: center;
}
.hsep {
  display: block;
  width: 28px;
  height: 1px;
  flex: none;
  background: #bbb;
  margin: 1px 0 2px;
}
.railbtn {
  width: 28px;
  height: 28px;
  flex: none;
  background: #e3d09f;
  border: 1px solid #c9b98f;
  border-radius: 2px;
  box-sizing: border-box;
  display: flex;
  align-items: center;
  justify-content: center;
  margin-bottom: 1px;
}
.raildbl {
  margin-top: 1px;
}
.panel {
  width: 197px;
  flex: none;
  background: #f8e5bb;
  padding: 0 3px;
  box-sizing: border-box;
  display: flex;
  flex-direction: column;
}
.panelhead {
  height: 24px;
  flex: none;
  display: flex;
  align-items: center;
  justify-content: space-between;
  padding: 0 2px;
  font-size: 12px;
}
.panelhead b {
  font-size: 13px;
}
.paneltools {
  height: 31px;
  flex: none;
  background: #f0f0f0;
  display: grid;
  grid-template-columns: 13px 24px 15px 1px 29px 29px 1px 28px 1fr 10px;
  align-items: center;
  justify-items: center;
}
.paneltools .vsep {
  height: 29px;
}
.panelend {
  width: 10px;
  height: 31px;
  background: #dcdcdc;
  display: flex;
  align-items: flex-end;
  justify-content: center;
  padding-bottom: 2px;
  box-sizing: border-box;
}
.grip {
  display: flex;
  flex-direction: column;
  align-items: flex-start;
  gap: 2px;
  justify-self: start;
}
.griptall {
  width: 9px;
  height: 16px;
}
.gripshort {
  width: 9px;
  height: 15px;
}
.tree {
  flex: 1;
  min-height: 0;
  background: #fff;
  position: relative;
  font-size: 12px;
}
.tree span {
  padding-bottom: 3px;
}
.treehead {
  height: 30px;
  display: flex;
  align-items: center;
  padding-left: 3px;
  gap: 7px;
}
.treehead span {
  margin-left: -2px;
}
.treerow {
  height: 30px;
  display: flex;
  align-items: center;
  padding-left: 33px;
  gap: 5px;
}
.watermark {
  position: absolute;
  right: 13px;
  bottom: 12px;
  opacity: 0.25;
}
.splitter {
  width: 12px;
  flex: none;
  background: linear-gradient(to right, transparent 0 10px, #f0f0f0 10px),
    linear-gradient(to right, transparent 0 9px, #555 9px 10px, transparent 10px),
    #989898;
  display: flex;
  align-items: flex-start;
  padding: 177px 0 0 1px;
  box-sizing: border-box;
}
.pill {
  width: 8px;
  height: 58px;
  background: #e6e6e6;
  border: 1px solid #8c8c8c;
  border-radius: 4px;
  display: flex;
  align-items: center;
  justify-content: center;
  box-sizing: border-box;
}
.docwrap {
  flex: 1;
  min-width: 0;
  display: flex;
  flex-direction: column;
}
.docrow {
  flex: 1;
  min-height: 0;
  display: flex;
}
.canvas {
  flex: 1;
  min-width: 0;
  background-color: #969696;
  background-image: repeating-conic-gradient(#949494 0 25%, #989898 0 50%);
  background-size: 3px 3px;
  border: 1px solid #555;
  box-sizing: border-box;
  padding: 6px 0 0 89px;
  overflow: hidden;
}
.pdfpage {
  width: 453px;
  height: 376px;
  background: #fff;
  overflow: hidden;
}
.tiny text {
  font-family: 'Liberation Sans', sans-serif;
  font-size: 4.1px;
  font-weight: 700;
}
.room text {
  font-family: 'Liberation Sans', sans-serif;
  font-size: 7.2px;
}
.vscroll {
  width: 17px;
  flex: none;
  background: #f0f0f0;
  display: flex;
  flex-direction: column;
  align-items: center;
  padding-top: 7px;
  box-sizing: border-box;
}
.thumb {
  width: 6px;
  height: 46px;
  margin-top: 5px;
  background: #8c8c8c;
  border-radius: 3px;
}
.vdown {
  margin-top: auto;
  margin-bottom: 6px;
}
.status {
  height: 30px;
  flex: none;
  background: #f0f0f0;
  display: grid;
  grid-template-columns: 14px 22px 18px 1px 14px 20px 11px 29px 28px 98px 28px 29px 1px 31px 11px 13px 25px 31px 27px 12px 12px 83px 1px 32px 10px 14px 6px 15px 12px;
  align-items: center;
  justify-items: center;
}
.status .vsep {
  height: 28px;
}
.status .grip {
  padding-left: 2px;
}
.status .grip .gripshort {
  width: 8px;
}
.pagebox {
  width: 93px;
  height: 22px;
  box-sizing: border-box;
  background: #fff;
  border: 1px solid #b5b5b5;
  border-radius: 2px;
  text-align: right;
  padding-right: 4px;
  font-size: 14px;
  line-height: 20px;
}
.statend {
  width: 12px;
  height: 30px;
  background: #dedede;
  display: flex;
  justify-content: center;
  padding-top: 3px;
  box-sizing: border-box;
}
</style>
